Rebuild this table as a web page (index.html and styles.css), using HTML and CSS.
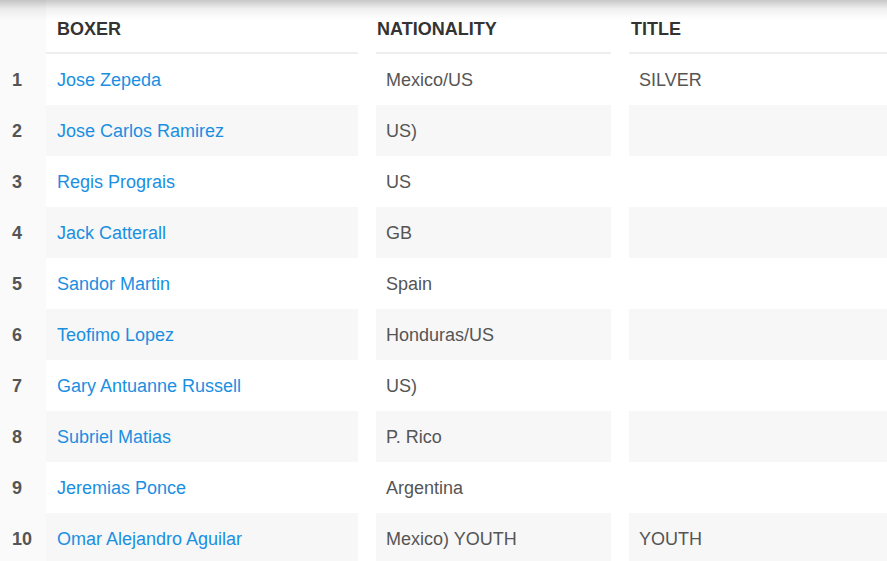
FILE: index.html
```html
<!DOCTYPE html>
<html>
<head>
<meta charset="utf-8">
<link rel="stylesheet" href="styles.css">
</head>
<body>
<div class="table">
  <div class="row head">
    <div class="cell rank"></div>
    <div class="cell boxer">BOXER</div>
    <div class="cell nat">NATIONALITY</div>
    <div class="cell title">TITLE</div>
  </div>
  <div class="row">
    <div class="cell rank">1</div>
    <div class="cell boxer"><a href="#">Jose Zepeda</a></div>
    <div class="cell nat">Mexico/US</div>
    <div class="cell title">SILVER</div>
  </div>
  <div class="row alt">
    <div class="cell rank">2</div>
    <div class="cell boxer"><a href="#">Jose Carlos Ramirez</a></div>
    <div class="cell nat">US)</div>
    <div class="cell title"></div>
  </div>
  <div class="row">
    <div class="cell rank">3</div>
    <div class="cell boxer"><a href="#">Regis Prograis</a></div>
    <div class="cell nat">US</div>
    <div class="cell title"></div>
  </div>
  <div class="row alt">
    <div class="cell rank">4</div>
    <div class="cell boxer"><a href="#">Jack Catterall</a></div>
    <div class="cell nat">GB</div>
    <div class="cell title"></div>
  </div>
  <div class="row">
    <div class="cell rank">5</div>
    <div class="cell boxer"><a href="#">Sandor Martin</a></div>
    <div class="cell nat">Spain</div>
    <div class="cell title"></div>
  </div>
  <div class="row alt">
    <div class="cell rank">6</div>
    <div class="cell boxer"><a href="#">Teofimo Lopez</a></div>
    <div class="cell nat">Honduras/US</div>
    <div class="cell title"></div>
  </div>
  <div class="row">
    <div class="cell rank">7</div>
    <div class="cell boxer"><a href="#">Gary Antuanne Russell</a></div>
    <div class="cell nat">US)</div>
    <div class="cell title"></div>
  </div>
  <div class="row alt">
    <div class="cell rank">8</div>
    <div class="cell boxer"><a href="#">Subriel Matias</a></div>
    <div class="cell nat">P. Rico</div>
    <div class="cell title"></div>
  </div>
  <div class="row">
    <div class="cell rank">9</div>
    <div class="cell boxer"><a href="#">Jeremias Ponce</a></div>
    <div class="cell nat">Argentina</div>
    <div class="cell title"></div>
  </div>
  <div class="row alt">
    <div class="cell rank">10</div>
    <div class="cell boxer"><a href="#">Omar Alejandro Aguilar</a></div>
    <div class="cell nat">Mexico) YOUTH</div>
    <div class="cell title">YOUTH</div>
  </div>
</div>
<div class="shade"></div>
</body>
</html>
```

FILE: styles.css
```css
html, body {
  margin: 0;
  padding: 0;
  background: #ffffff;
  overflow: hidden;
}
body {
  font-family: "Liberation Sans", Arial, sans-serif;
  font-size: 18px;
  color: #555555;
  width: 887px;
  height: 561px;
}
.table {
  display: flex;
  flex-direction: column;
}
.row {
  display: grid;
  grid-template-columns: 46px 312px 253px 276px;
  height: 51px;
}
.cell {
  display: flex;
  align-items: center;
  padding-left: 11px;
  padding-top: 2px;
  box-sizing: border-box;
  white-space: nowrap;
}
.nat, .title {
  margin-left: 18px;
  padding-left: 10px;
}
.rank {
  background: #fafafa;
  font-weight: bold;
  color: #555555;
  padding-left: 12px;
}
.alt .boxer, .alt .nat, .alt .title {
  background: #f7f7f7;
}
.head {
  height: 54px;
}
.head .cell {
  font-weight: bold;
  color: #333333;
  padding-top: 6px;
  border-bottom: 2px solid #eeeeee;
}
.head .rank {
  border-bottom: none;
}
.head .nat {
  padding-left: 1px;
}
.head .title {
  padding-left: 2px;
}
a {
  color: #1a8fe2;
  text-decoration: none;
}
.shade {
  position: absolute;
  left: 0;
  top: 0;
  width: 887px;
  height: 20px;
  background: linear-gradient(to bottom, rgba(0,0,0,0.22), rgba(0,0,0,0.06) 45%, rgba(0,0,0,0));
  pointer-events: none;
}
```
